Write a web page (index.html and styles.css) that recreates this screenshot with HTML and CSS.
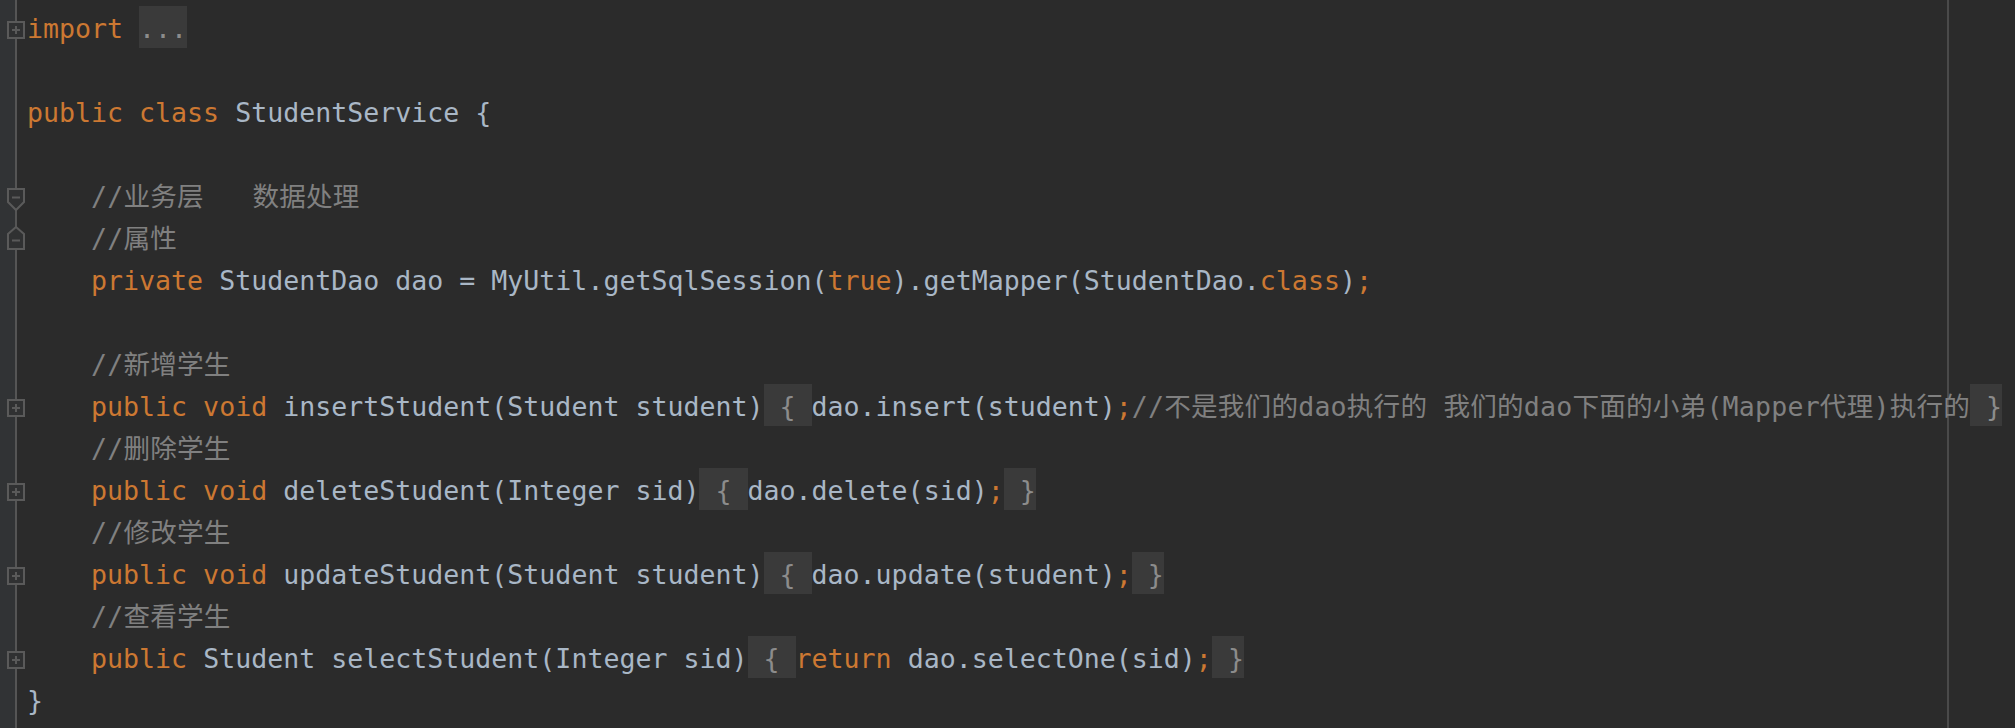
FILE: index.html
```html
<!DOCTYPE html>
<html lang="zh">
<head>
<meta charset="utf-8">
<title>StudentService.java</title>
<link rel="stylesheet" href="styles.css">
</head>
<body>
<div class="editor">
  <div class="gutter">
    <div class="gcell"><svg class="fold-plus" width="18" height="18" viewBox="0 0 18 18"><rect x="1" y="1" width="16" height="16"/><path d="M5 9H13M9 5V13"/></svg></div>
    <div class="gcell"></div>
    <div class="gcell"></div>
    <div class="gcell"></div>
    <div class="gcell"><svg class="fold-start" width="18" height="24" viewBox="0 0 18 24"><path d="M1 1H17V14L9 22L1 14Z"/><path d="M5 9.5H13"/></svg></div>
    <div class="gcell"><svg class="fold-end" width="18" height="24" viewBox="0 0 18 24"><path d="M9 1L17 8V23H1V8Z"/><path d="M5 14.5H13"/></svg></div>
    <div class="gcell"></div>
    <div class="gcell"></div>
    <div class="gcell"></div>
    <div class="gcell"><svg class="fold-plus" width="18" height="18" viewBox="0 0 18 18"><rect x="1" y="1" width="16" height="16"/><path d="M5 9H13M9 5V13"/></svg></div>
    <div class="gcell"></div>
    <div class="gcell"><svg class="fold-plus" width="18" height="18" viewBox="0 0 18 18"><rect x="1" y="1" width="16" height="16"/><path d="M5 9H13M9 5V13"/></svg></div>
    <div class="gcell"></div>
    <div class="gcell"><svg class="fold-plus" width="18" height="18" viewBox="0 0 18 18"><rect x="1" y="1" width="16" height="16"/><path d="M5 9H13M9 5V13"/></svg></div>
    <div class="gcell"></div>
    <div class="gcell"><svg class="fold-plus" width="18" height="18" viewBox="0 0 18 18"><rect x="1" y="1" width="16" height="16"/><path d="M5 9H13M9 5V13"/></svg></div>
    <div class="gcell"></div>
  </div>
  <div class="guide"></div>
  <div class="code">
    <div class="line"><span class="k">import</span> <span class="fold">...</span></div>
    <div class="line"></div>
    <div class="line"><span class="k">public class</span> StudentService {</div>
    <div class="line"></div>
    <div class="line">    <span class="c">//业务层   数据处理</span></div>
    <div class="line">    <span class="c">//属性</span></div>
    <div class="line">    <span class="k">private</span> StudentDao dao = MyUtil.getSqlSession(<span class="k">true</span>).getMapper(StudentDao.<span class="k">class</span>)<span class="k">;</span></div>
    <div class="line"></div>
    <div class="line">    <span class="c">//新增学生</span></div>
    <div class="line">    <span class="k">public void</span> insertStudent(Student student)<span class="fold"> { </span>dao.insert(student)<span class="k">;</span><span class="c">//不是我们的dao执行的 我们的dao下面的小弟(Mapper代理)执行的</span><span class="fold"> }</span></div>
    <div class="line">    <span class="c">//删除学生</span></div>
    <div class="line">    <span class="k">public void</span> deleteStudent(Integer sid)<span class="fold"> { </span>dao.delete(sid)<span class="k">;</span><span class="fold"> }</span></div>
    <div class="line">    <span class="c">//修改学生</span></div>
    <div class="line">    <span class="k">public void</span> updateStudent(Student student)<span class="fold"> { </span>dao.update(student)<span class="k">;</span><span class="fold"> }</span></div>
    <div class="line">    <span class="c">//查看学生</span></div>
    <div class="line">    <span class="k">public</span> Student selectStudent(Integer sid)<span class="fold"> { </span><span class="k">return</span> dao.selectOne(sid)<span class="k">;</span><span class="fold"> }</span></div>
    <div class="line">}</div>
  </div>
</div>
</body>
</html>
```
FILE: styles.css
```css
html, body {
  margin: 0;
  padding: 0;
  background: #2b2b2b;
  overflow: hidden;
}

.editor {
  position: relative;
  display: flex;
  height: 728px;
  width: 2015px;
  background: #2b2b2b;
}

.gutter {
  flex: 0 0 27px;
  padding-top: 6px;
  background: linear-gradient(to right, #313335 0, #313335 15px, #555555 15px, #555555 17px, #2b2b2b 17px);
  position: relative;
  z-index: 2;
}

.gcell {
  height: 42px;
  position: relative;
}

.gcell svg {
  position: absolute;
  left: 7px;
  fill: #303132;
  stroke: #5a5a5a;
  stroke-width: 2;
}

.fold-plus { top: 15px; }
.fold-start { top: 14px; }
.fold-end { top: 10px; }

.guide {
  position: absolute;
  left: 1947px;
  top: 0;
  width: 2px;
  height: 100%;
  background: #4a4a4a;
  z-index: 0;
}

.code {
  flex: 1;
  position: relative;
  z-index: 1;
  padding-top: 6px;
  font-family: "DejaVu Sans Mono", "Noto Sans CJK SC", monospace;
  font-size: 26.6px;
  color: #a9b7c6;
}

.line {
  height: 42px;
  line-height: 46px;
  white-space: pre;
}

.k { color: #cc7832; }
.c { color: #808080; letter-spacing: 0.2px; }

.fold {
  display: inline-block;
  height: 42px;
  background: #3a3a3a;
  color: #8c8c8c;
}
```
